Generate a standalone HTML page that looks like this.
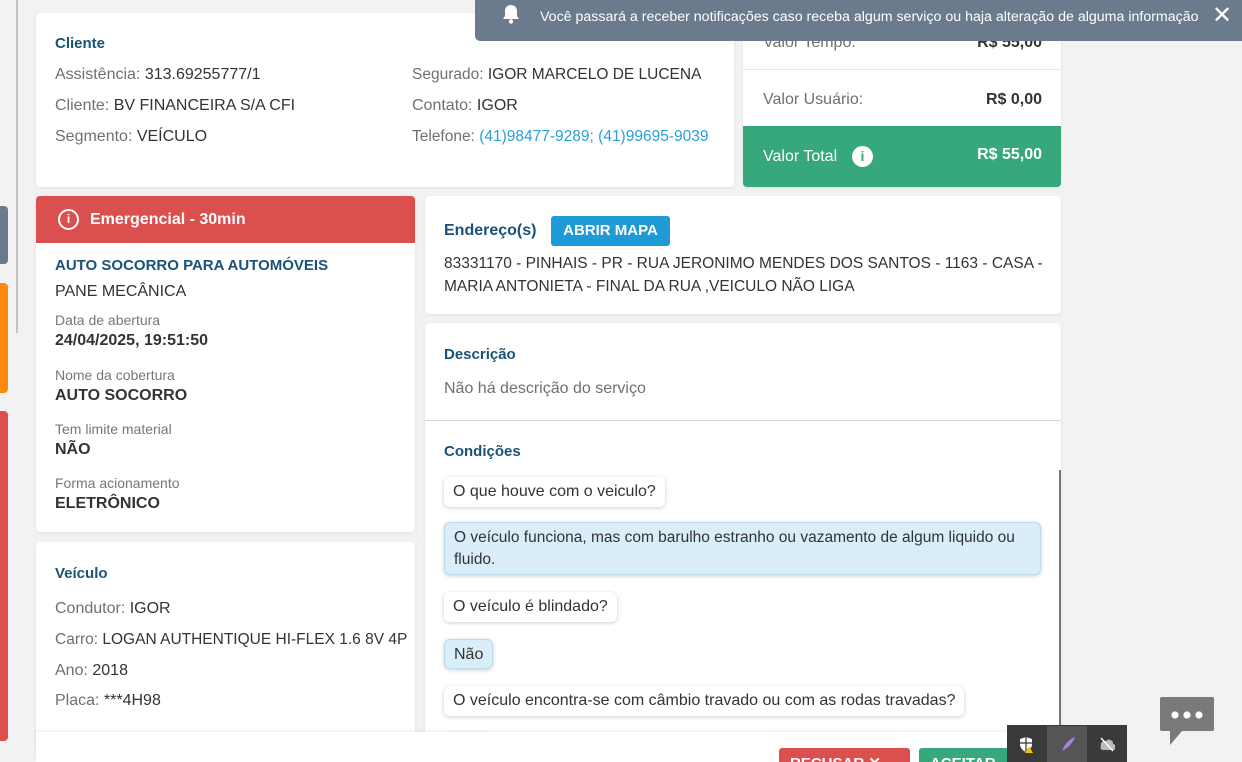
<!DOCTYPE html>
<html style="width:1242px;height:762px;overflow:hidden"><head><meta charset="utf-8"><style>
*{margin:0;padding:0;box-sizing:border-box}
body{width:1242px;height:762px;overflow:hidden;background:#f2f2f2;font-family:"Liberation Sans",sans-serif;font-size:16px;color:#333;position:relative}
.a{position:absolute;white-space:nowrap}
.card{position:absolute;background:#fff;border-radius:4px;box-shadow:0 1px 3px rgba(0,0,0,.08)}
.t{color:#1a5278;font-weight:bold;font-size:15px}
.g{color:#707070}
.lbl{color:#777;font-size:14px}
.b{font-weight:bold;color:#333}
.chip{position:absolute;background:#fff;border-radius:6px;box-shadow:0 1px 4px rgba(0,0,0,.2);padding:0 9px;height:30px;line-height:30px;font-size:16px;color:#333;white-space:nowrap}
.ans{background:#d9eef8;border:1px solid #b9dcee}
</style></head><body>
<div class="a" style="left:16px;top:0;width:2px;height:333px;background:#c4c4c4"></div>
<div class="a" style="left:0;top:206px;width:8px;height:58px;background:#6b7a8c;border-radius:0 4px 4px 0"></div>
<div class="a" style="left:0;top:283px;width:8px;height:110px;background:#fd8a0e;border-radius:0 4px 4px 0"></div>
<div class="a" style="left:0;top:411px;width:8px;height:330px;background:#dc4f4f;border-radius:0 4px 4px 0"></div>

<div class="card" style="left:36px;top:13px;width:698px;height:174px">
 <div class="a t" style="left:19px;top:22px">Cliente</div>
 <div class="a" style="left:19px;top:53px"><span class="g">Assistência:</span> 313.69255777/1</div>
 <div class="a" style="left:19px;top:84px"><span class="g">Cliente:</span> BV FINANCEIRA S/A CFI</div>
 <div class="a" style="left:19px;top:115px"><span class="g">Segmento:</span> VEÍCULO</div>
 <div class="a" style="left:376px;top:53px;font-size:15.5px"><span class="g">Segurado:</span> IGOR MARCELO DE LUCENA</div>
 <div class="a" style="left:376px;top:84px"><span class="g">Contato:</span> IGOR</div>
 <div class="a" style="left:376px;top:115px;font-size:15.5px"><span class="g">Telefone:</span> <span style="color:#2a9fd6">(41)98477-9289; (41)99695-9039</span></div>
</div>

<div class="card" style="left:743px;top:13px;width:318px;height:174px;overflow:hidden">
 <div class="a g" style="left:20px;top:21px">Valor Tempo:</div>
 <div class="a b" style="right:19px;top:21px">R$ 55,00</div>
 <div class="a" style="left:0;top:56px;width:318px;height:1px;background:#e6e6e6"></div>
 <div class="a g" style="left:20px;top:78px">Valor Usuário:</div>
 <div class="a b" style="right:19px;top:78px">R$ 0,00</div>
 <div class="a" style="left:0;top:113px;width:318px;height:61px;background:#36a87c">
  <div class="a" style="left:20px;top:22px;color:#fff;font-size:16px">Valor Total</div>
  <div class="a" style="left:109px;top:20px;width:21px;height:21px;border-radius:50%;background:#fff;color:#36a87c;font-weight:bold;font-size:14px;text-align:center;line-height:21px">i</div>
  <div class="a" style="right:19px;top:20px;color:#fff;font-weight:bold;font-size:16px">R$ 55,00</div>
 </div>
</div>

<div class="a" style="left:475px;top:0;width:767px;height:41px;background:#6b7a8c;border-radius:0 0 0 5px">
 <svg class="a" style="left:26px;top:3px" width="20" height="22" viewBox="0 0 20 22"><path d="M10 2c-3.5 0-6 2.6-6 6v5l-2 3h16l-2-3V8c0-3.4-2.5-6-6-6z" fill="#fff"/><circle cx="10" cy="18.5" r="2.2" fill="#fff"/></svg>
 <div class="a" style="left:65px;top:9px;color:#fff;font-size:14.2px">Você passará a receber notificações caso receba algum serviço ou haja alteração de alguma informação</div>
 <div class="a" style="left:737px;top:1px;color:#fff;font-size:24px">✕</div>
</div>

<div class="card" style="left:36px;top:196px;width:379px;height:336px;overflow:hidden">
 <div class="a" style="left:0;top:0;width:379px;height:47px;background:#dc4f4f">
  <div class="a" style="left:22px;top:13px;width:21px;height:21px;border:2px solid #fff;border-radius:50%;color:#fff;font-size:12px;font-weight:bold;text-align:center;line-height:17px">i</div>
  <div class="a" style="left:54px;top:15px;color:#fff;font-weight:bold;font-size:16px">Emergencial - 30min</div>
 </div>
 <div class="a t" style="left:19px;top:61px">AUTO SOCORRO PARA AUTOMÓVEIS</div>
 <div class="a" style="left:19px;top:87px">PANE MECÂNICA</div>
 <div class="a lbl" style="left:19px;top:116px">Data de abertura</div>
 <div class="a b" style="left:19px;top:136px">24/04/2025, 19:51:50</div>
 <div class="a lbl" style="left:19px;top:171px">Nome da cobertura</div>
 <div class="a b" style="left:19px;top:191px">AUTO SOCORRO</div>
 <div class="a lbl" style="left:19px;top:225px">Tem limite material</div>
 <div class="a b" style="left:19px;top:245px">NÃO</div>
 <div class="a lbl" style="left:19px;top:279px">Forma acionamento</div>
 <div class="a b" style="left:19px;top:299px">ELETRÔNICO</div>
</div>

<div class="card" style="left:36px;top:542px;width:379px;height:210px">
 <div class="a t" style="left:19px;top:23px">Veículo</div>
 <div class="a" style="left:19px;top:58px"><span class="g">Condutor:</span> IGOR</div>
 <div class="a" style="left:19px;top:89px;font-size:15.5px"><span class="g">Carro:</span> LOGAN AUTHENTIQUE HI-FLEX 1.6 8V 4P</div>
 <div class="a" style="left:19px;top:120px"><span class="g">Ano:</span> 2018</div>
 <div class="a" style="left:19px;top:150px"><span class="g">Placa:</span> ***4H98</div>
</div>

<div class="card" style="left:425px;top:196px;width:636px;height:118px">
 <div class="a t" style="left:19px;top:26px;font-size:16px">Endereço(s)</div>
 <div class="a" style="left:126px;top:20px;width:119px;height:30px;background:#1e9ad6;border-radius:3px;color:#fff;font-weight:bold;font-size:15px;text-align:center;line-height:30px">ABRIR MAPA</div>
 <div class="a" style="left:19px;top:56px;font-size:15.5px;line-height:23px">83331170 - PINHAIS - PR - RUA JERONIMO MENDES DOS SANTOS - 1163 - CASA -<br>MARIA ANTONIETA - FINAL DA RUA ,VEICULO NÃO LIGA</div>
</div>

<div class="card" style="left:425px;top:323px;width:636px;height:439px;overflow:hidden">
 <div class="a t" style="left:19px;top:23px">Descrição</div>
 <div class="a g" style="left:19px;top:57px">Não há descrição do serviço</div>
 <div class="a" style="left:0;top:97px;width:636px;height:1px;background:#d6d6d6"></div>
 <div class="a t" style="left:19px;top:120px">Condições</div>
 <div class="a" style="left:634px;top:147px;width:2px;height:270px;background:#777"></div>
 <div class="chip" style="left:19px;top:154px">O que houve com o veiculo?</div>
 <div class="chip ans" style="left:19px;top:199px;height:53px;line-height:22px;padding-top:4px;width:597px;white-space:normal;font-size:15.5px">O veículo funciona, mas com barulho estranho ou vazamento de algum liquido ou fluido.</div>
 <div class="chip" style="left:19px;top:269px">O veículo é blindado?</div>
 <div class="chip ans" style="left:19px;top:316px">Não</div>
 <div class="chip" style="left:19px;top:363px">O veículo encontra-se com câmbio travado ou com as rodas travadas?</div>
 <div class="chip ans" style="left:19px;top:410px;width:48px"></div>
</div>

<div class="a" style="left:36px;top:732px;width:1025px;height:30px;background:#fff;box-shadow:0 -1px 3px rgba(0,0,0,.08)"></div>
<div class="a" style="left:779px;top:748px;width:131px;height:14px;background:#dc4f4f;border-radius:3px 3px 0 0;color:#fff;font-weight:bold;font-size:15px;padding:7px 0 0 11px;overflow:hidden;line-height:17px">RECUSAR ✕</div>
<div class="a" style="left:919px;top:748px;width:92px;height:14px;background:#36a87c;border-radius:3px 3px 0 0;color:#fff;font-weight:bold;font-size:15px;padding:7px 0 0 11px;overflow:hidden;line-height:17px">ACEITAR</div>

<div class="a" style="left:1007px;top:725px;width:120px;height:37px;background:#3a3a3a">
 <div class="a" style="left:40px;top:1px;width:40px;height:36px;background:#555"></div>
 <svg class="a" style="left:12px;top:11px" width="16" height="18" viewBox="0 0 16 18"><path d="M7 1l6 2v5c0 4-3 7-6 8-3-1-6-4-6-8V3z" fill="#fff"/><path d="M7 1v15M1 7h12" stroke="#333" stroke-width="1.2"/><path d="M10 10l4 7h-8z" fill="#f5c400"/></svg>
 <svg class="a" style="left:52px;top:10px" width="18" height="18" viewBox="0 0 18 18"><path d="M3 16C5 10 10 4 16 2 14 8 9 13 3 16z" fill="#a77fe0"/></svg>
 <svg class="a" style="left:92px;top:11px" width="16" height="16" viewBox="0 0 16 16"><path d="M2 10a4 4 0 015-5 4 4 0 017 3 3 3 0 010 6H4a2.5 2.5 0 01-2-4z" fill="#bbb"/><path d="M2 2l12 13" stroke="#fff" stroke-width="1.4"/></svg>
</div>

<svg class="a" style="left:1158px;top:695px" width="58" height="52" viewBox="0 0 58 52"><path d="M4 2h50a2 2 0 012 2v30a2 2 0 01-2 2H24l-12 14V36H4a2 2 0 01-2-2V4a2 2 0 012-2z" fill="#7a7a7a"/><circle cx="17" cy="20" r="3.6" fill="#fff"/><circle cx="29" cy="20" r="3.6" fill="#fff"/><circle cx="41" cy="20" r="3.6" fill="#fff"/></svg>
</body></html>
